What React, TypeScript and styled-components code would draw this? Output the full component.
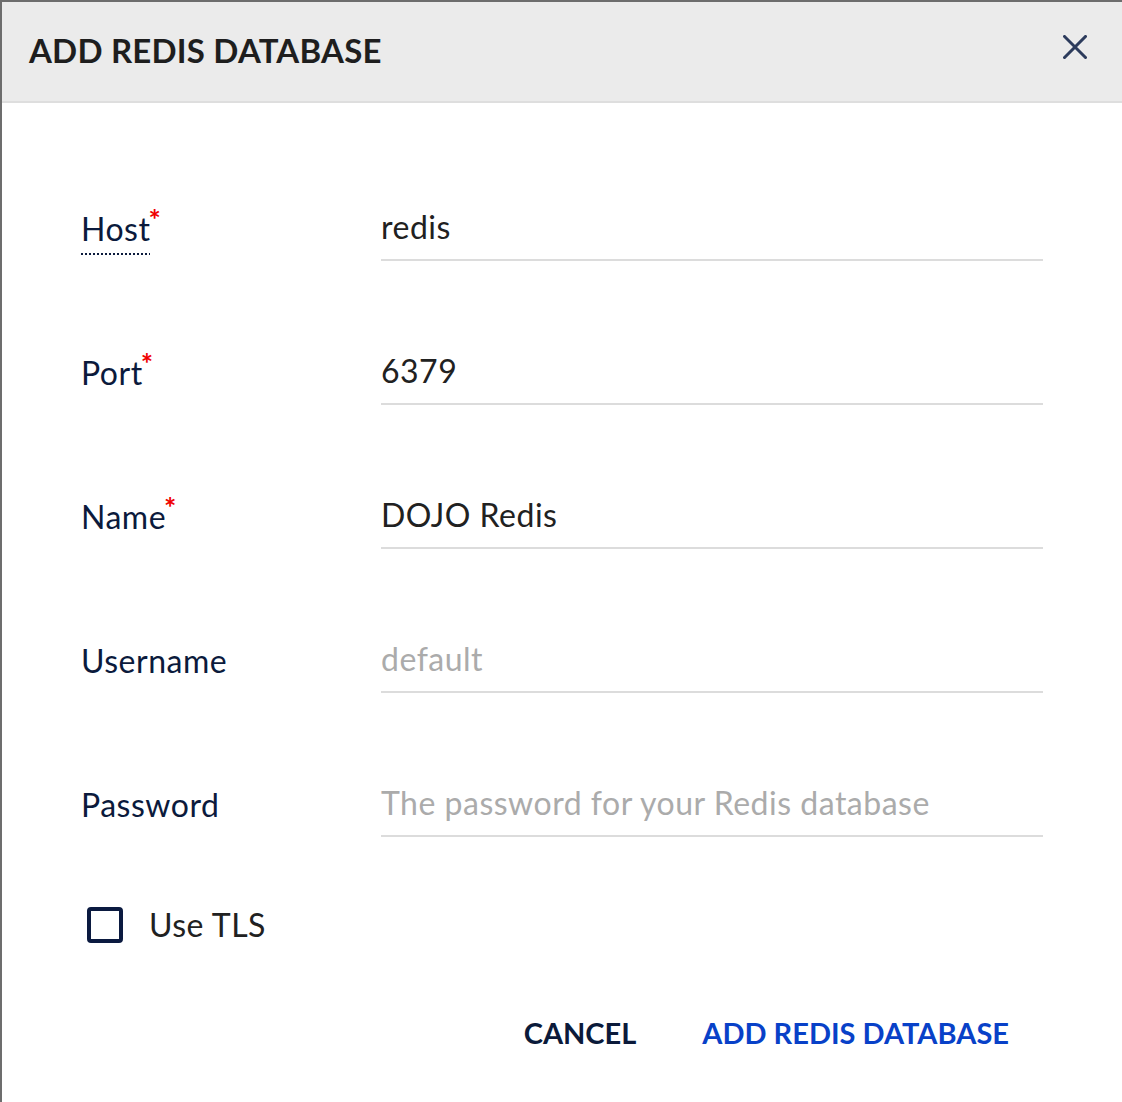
import React from "react";
import styled, { createGlobalStyle } from "styled-components";

const Global = createGlobalStyle`
  html, body { margin: 0; padding: 0; background: #ffffff; }
  body { font-family: Lato, "Noto Sans", sans-serif; }
  * { box-sizing: border-box; }
`;

const Dialog = styled.div`
  width: 1122px;
  height: 1102px;
  border-top: 2px solid #6d6d6d;
  border-left: 2px solid #6d6d6d;
  background: #ffffff;
  display: flex;
  flex-direction: column;
`;

const Header = styled.header`
  height: 101px;
  flex: none;
  background: #ebebeb;
  border-bottom: 2px solid #dedede;
  display: flex;
  align-items: center;
  justify-content: space-between;
  padding: 0 34px 4px 27px;
`;

const Title = styled.h1`
  margin: 0;
  font-family: Lato, "Noto Sans", sans-serif;
  font-weight: 700;
  font-size: 33px;
  letter-spacing: 0.2px;
  color: #1e1e1e;
`;

const CloseButton = styled.button`
  border: 0;
  background: transparent;
  padding: 0;
  width: 26px;
  height: 26px;
  display: flex;
  align-items: center;
  justify-content: center;
  margin-top: -6px;
  cursor: pointer;
`;

const Body = styled.div`
  display: flex;
  flex-direction: column;
  padding: 106px 79px 0 79px;
`;

const Fields = styled.div`
  display: flex;
  flex-direction: column;
  gap: 92px;
`;

const Row = styled.div`
  display: grid;
  grid-template-columns: 300px 1fr;
  align-items: start;
  height: 52px;
`;

const Label = styled.label<{ $hint?: boolean }>`
  position: relative;
  justify-self: start;
  font-size: 32px;
  letter-spacing: 0.5px;
  color: #0b1a3c;
  line-height: 36px;
  margin-top: 2px;
  ${(p) =>
    p.$hint
      ? `
    background-image: linear-gradient(to right, #0b1a3c 50%, transparent 50%);
    background-size: 4px 2px;
    background-repeat: repeat-x;
    background-position: 0 100%;
    padding-bottom: 8px;
  `
      : ""}
`;

const Required = styled.span`
  position: absolute;
  top: -6px;
  left: calc(100% - 2px);
  color: #f00000;
  font-size: 29px;
  font-weight: 700;
  line-height: 28px;
`;

const Input = styled.input`
  width: 100%;
  height: 52px;
  border: 0;
  border-bottom: 2px solid #dcdcdc;
  outline: none;
  padding: 0 0 15px 0;
  font-family: Lato, "Noto Sans", sans-serif;
  font-size: 32px;
  letter-spacing: 0.5px;
  color: #212121;
  background: transparent;
  &::placeholder {
    color: #ababab;
  }
`;

const CheckRow = styled.label`
  display: flex;
  align-items: center;
  gap: 26px;
  margin-top: 69px;
  padding-left: 6px;
  font-size: 32px;
  letter-spacing: 0.5px;
  line-height: 38px;
  color: #212121;
`;

const Box = styled.span`
  width: 36px;
  height: 36px;
  border: 4px solid #0b1a40;
  border-radius: 4px;
  display: inline-block;
  flex: none;
`;

const Actions = styled.div`
  display: flex;
  justify-content: flex-end;
  gap: 34px;
  margin-top: 65px;
  padding-right: 18px;
`;

const TextButton = styled.button<{ $primary?: boolean }>`
  border: 0;
  background: transparent;
  padding: 6px 16px;
  font-family: Lato, "Noto Sans", sans-serif;
  font-weight: 700;
  font-size: 29px;
  color: ${(p) => (p.$primary ? "#0841c8" : "#0b1a3a")};
  cursor: pointer;
`;

const fields = [
  { label: "Host", value: "redis", required: true, hint: true },
  { label: "Port", value: "6379", required: true },
  { label: "Name", value: "DOJO Redis", required: true },
  { label: "Username", placeholder: "default" },
  { label: "Password", placeholder: "The password for your Redis database" },
];

export default function App() {
  return (
    <>
      <Global />
      <Dialog>
        <Header>
          <Title>ADD REDIS DATABASE</Title>
          <CloseButton aria-label="close">
            <svg width="24" height="24" viewBox="0 0 24 24">
              <path d="M1.5 1.5 L22.5 22.5 M22.5 1.5 L1.5 22.5" stroke="#2c3b5c" strokeWidth="3" strokeLinecap="square" />
            </svg>
          </CloseButton>
        </Header>
        <Body>
          <Fields>
            {fields.map((f) => (
              <Row key={f.label}>
                <Label $hint={f.hint}>
                  {f.label}
                  {f.required && <Required>*</Required>}
                </Label>
                <Input defaultValue={f.value} placeholder={f.placeholder} />
              </Row>
            ))}
          </Fields>
          <CheckRow>
            <Box />
            Use TLS
          </CheckRow>
          <Actions>
            <TextButton>CANCEL</TextButton>
            <TextButton $primary>ADD REDIS DATABASE</TextButton>
          </Actions>
        </Body>
      </Dialog>
    </>
  );
}
